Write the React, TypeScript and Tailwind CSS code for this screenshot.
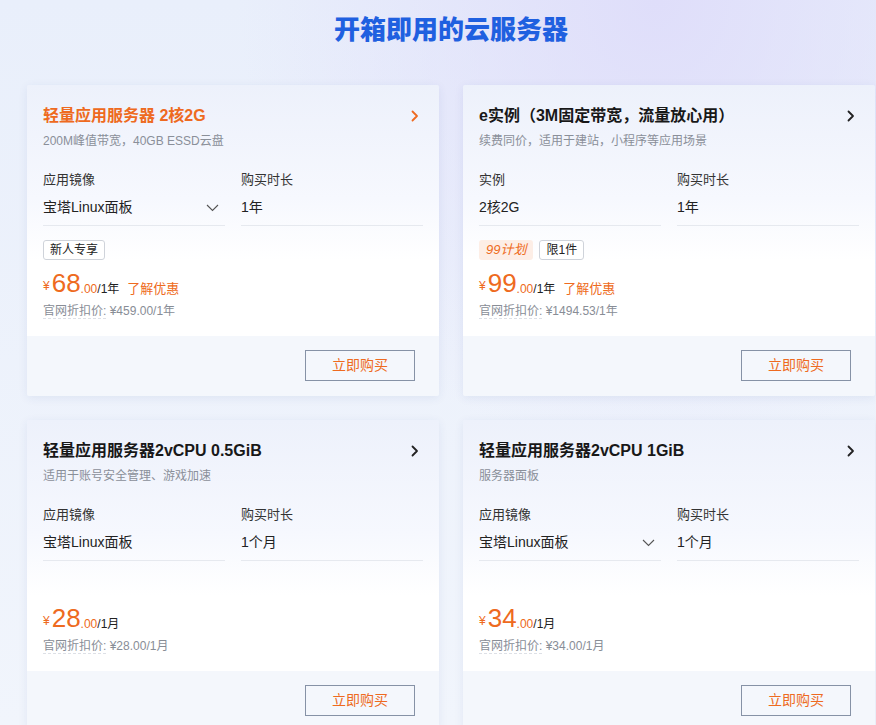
import React from "react";

type Card = {
  title: string;
  titleOrange?: boolean;
  sub: string;
  leftLabel: string;
  leftValue: string;
  dropdown?: boolean;
  rightValue: string;
  tags: { text: string; kind: "plain" | "hot" }[];
  price: string;
  unit: string;
  promo?: boolean;
  official: string;
};

const cards: Card[] = [
  {
    title: "轻量应用服务器 2核2G",
    titleOrange: true,
    sub: "200M峰值带宽，40GB ESSD云盘",
    leftLabel: "应用镜像",
    leftValue: "宝塔Linux面板",
    dropdown: true,
    rightValue: "1年",
    tags: [{ text: "新人专享", kind: "plain" }],
    price: "68",
    unit: "/1年",
    promo: true,
    official: "¥459.00/1年",
  },
  {
    title: "e实例（3M固定带宽，流量放心用）",
    sub: "续费同价，适用于建站，小程序等应用场景",
    leftLabel: "实例",
    leftValue: "2核2G",
    rightValue: "1年",
    tags: [
      { text: "99计划", kind: "hot" },
      { text: "限1件", kind: "plain" },
    ],
    price: "99",
    unit: "/1年",
    promo: true,
    official: "¥1494.53/1年",
  },
  {
    title: "轻量应用服务器2vCPU 0.5GiB",
    sub: "适用于账号安全管理、游戏加速",
    leftLabel: "应用镜像",
    leftValue: "宝塔Linux面板",
    rightValue: "1个月",
    tags: [],
    price: "28",
    unit: "/1月",
    official: "¥28.00/1月",
  },
  {
    title: "轻量应用服务器2vCPU 1GiB",
    sub: "服务器面板",
    leftLabel: "应用镜像",
    leftValue: "宝塔Linux面板",
    dropdown: true,
    rightValue: "1个月",
    tags: [],
    price: "34",
    unit: "/1月",
    official: "¥34.00/1月",
  },
];

const ORANGE = "#ee6a20";

function ChevronRight({ color }: { color: string }) {
  return (
    <svg width="8" height="12" viewBox="0 0 8 12" fill="none">
      <path d="M1.5 1.5 L6 6 L1.5 10.5" stroke={color} strokeWidth="1.8" strokeLinecap="round" strokeLinejoin="round" />
    </svg>
  );
}

function ChevronDown() {
  return (
    <svg width="13" height="8" viewBox="0 0 13 8" fill="none">
      <path d="M1 1 L6.5 6.5 L12 1" stroke="#555" strokeWidth="1.1" />
    </svg>
  );
}

function ProductCard({ c }: { c: Card }) {
  return (
    <div className="w-[412px] shrink-0 rounded-[2px] shadow-[0_2px_10px_rgba(40,70,140,0.08)] overflow-hidden">
      <div className="h-[251px] px-4 pt-[19px] bg-[linear-gradient(180deg,#edf1fb_0%,#f6f8fe_45%,#ffffff_70%)]">
        <div className="flex items-center justify-between h-[24px] pr-[4px]">
          <div
            className={`text-[16px] font-bold leading-[24px] ${c.titleOrange ? "text-[#ee6a20]" : "text-[#181818]"}`}
          >
            {c.title}
          </div>
          <ChevronRight color={c.titleOrange ? ORANGE : "#222"} />
        </div>
        <div className="mt-[4px] text-[12px] leading-[18px] text-[#8a8f99]">{c.sub}</div>
        <div className="mt-[20px] grid grid-cols-2 gap-4">
          <div>
            <div className="text-[13px] leading-[20px] text-[#333]">{c.leftLabel}</div>
            <div className="h-[36px] border-b border-[#e6e9ef] flex items-center justify-between pr-[6px]">
              <span className="text-[14px] text-[#222]">{c.leftValue}</span>
              {c.dropdown && <ChevronDown />}
            </div>
          </div>
          <div>
            <div className="text-[13px] leading-[20px] text-[#333]">购买时长</div>
            <div className="h-[36px] border-b border-[#e6e9ef] flex items-center">
              <span className="text-[14px] text-[#222]">{c.rightValue}</span>
            </div>
          </div>
        </div>
        <div className="mt-[14px] h-[20px] flex items-center gap-[6px]">
          {c.tags.map((t) =>
            t.kind === "hot" ? (
              <span
                key={t.text}
                className="h-[20px] px-[7px] rounded-[3px] bg-[#fdeee6] text-[13px] italic leading-[20px] text-[#ee6a20]"
              >
                {t.text}
              </span>
            ) : (
              <span
                key={t.text}
                className="h-[20px] px-[6px] rounded-[3px] border border-[#cfd3da] bg-white text-[12px] leading-[18px] text-[#222]"
              >
                {t.text}
              </span>
            )
          )}
        </div>
        <div className="mt-[10px] h-[30px] flex items-end pb-[3px]">
          <span className="text-[12px] text-[#ee6a20] mr-[2px] mb-[2px]">¥</span>
          <span className="text-[26px] leading-[27px] text-[#ee6a20]">{c.price}</span>
          <span className="text-[12px] text-[#ee6a20] leading-[16px]">.00</span>
          <span className="text-[12px] text-[#222] leading-[16px]">{c.unit}</span>
          {c.promo && <span className="ml-[8px] text-[13px] leading-[17px] text-[#ee6a20]">了解优惠</span>}
        </div>
        <div className="mt-[2px] text-[12px] leading-[18px] text-[#888d96]">
          <span className="border-b border-dashed border-[#dde0e6]">官网折扣价:</span> {c.official}
        </div>
      </div>
      <div className="h-[60px] bg-[#f4f7fc] flex items-start justify-end pr-[24px] pt-[14px]">
        <button className="w-[110px] h-[31px] border border-[#8692a6] bg-transparent text-[14px] text-[#ee6a20]">
          立即购买
        </button>
      </div>
    </div>
  );
}

export default function App() {
  return (
    <div
      className="w-[876px] h-[725px] overflow-hidden bg-[#edf2fb] bg-[radial-gradient(ellipse_at_75%_0%,rgba(222,220,250,0.9)_0%,rgba(237,242,251,0)_45%),linear-gradient(180deg,#e9effb_0%,#f1f5fc_100%)]"
      style={{ fontFamily: '"Liberation Sans", "Noto Sans CJK SC", sans-serif' }}
    >
      <div className="pt-[11px] h-[85px] pl-[26px] text-center">
        <h1
          className="text-[26px] leading-[34px] font-black text-[#1f60e0]"
          style={{ fontFamily: '"Noto Sans CJK SC", sans-serif' }}
        >
          开箱即用的云服务器
        </h1>
      </div>
      <div className="pl-[27px] grid grid-cols-[412px_412px] gap-x-[24px] gap-y-[24px]">
        {cards.map((c) => (
          <ProductCard key={c.title} c={c} />
        ))}
      </div>
    </div>
  );
}
